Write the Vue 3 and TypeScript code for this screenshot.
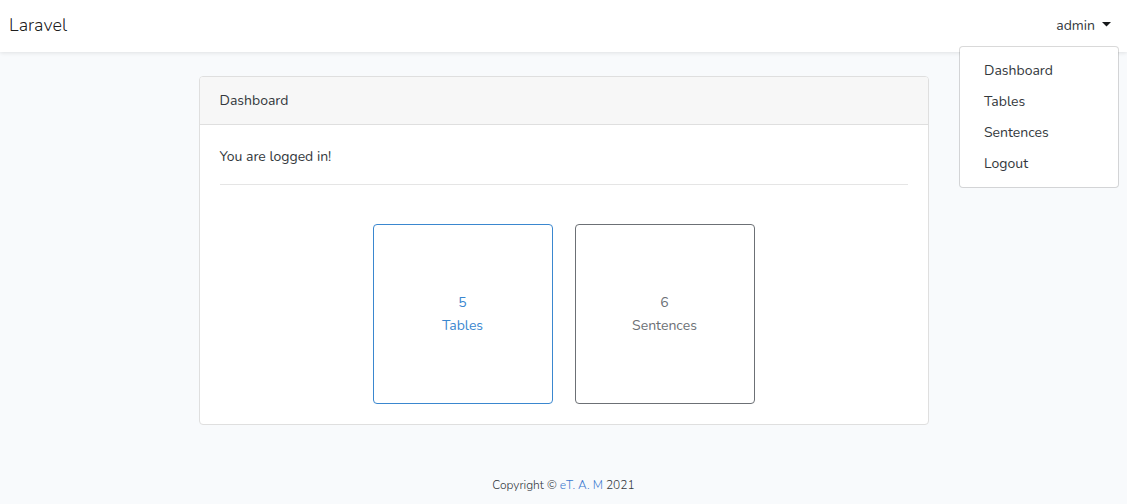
<script setup lang="ts">
import { ref } from 'vue'

interface MenuItem {
  label: string
  href: string
}

interface Stat {
  label: string
  count: number
  href: string
  variant: 'primary' | 'secondary'
}

const menuOpen = ref(true)

const menuItems: MenuItem[] = [
  { label: 'Dashboard', href: '#dashboard' },
  { label: 'Tables', href: '#tables' },
  { label: 'Sentences', href: '#sentences' },
  { label: 'Logout', href: '#logout' },
]

const stats: Stat[] = [
  { label: 'Tables', count: 5, href: '#tables', variant: 'primary' },
  { label: 'Sentences', count: 6, href: '#sentences', variant: 'secondary' },
]
</script>

<template>
  <div class="page">
    <header class="navbar">
      <a class="brand" href="#home">Laravel</a>
      <nav class="account">
        <button
          class="account-toggle"
          type="button"
          aria-haspopup="true"
          :aria-expanded="menuOpen"
          @click="menuOpen = !menuOpen"
        >
          admin
          <svg class="caret" viewBox="0 0 9 5" aria-hidden="true">
            <path d="M0 0h9L4.500 4.500z" fill="currentColor" />
          </svg>
        </button>
        <div v-if="menuOpen" class="menu">
          <a v-for="item in menuItems" :key="item.label" class="menu-item" :href="item.href">{{ item.label }}</a>
        </div>
      </nav>
    </header>

    <main class="content">
      <section class="card">
        <div class="card-header">Dashboard</div>
        <div class="card-body">
          <div>You are logged in!</div>
          <hr class="divider" />
          <div class="tiles">
            <a v-for="stat in stats" :key="stat.label" class="tile" :class="stat.variant" :href="stat.href">
              <span>{{ stat.count }}</span>
              <span>{{ stat.label }}</span>
            </a>
          </div>
        </div>
      </section>
    </main>

    <footer class="footer">Copyright © <a class="author" href="#author">eT. A. M</a> 2021</footer>
  </div>
</template>

<style>
body {
  margin: 0;
  background: #f8fafc;
}
</style>

<style scoped>
.page,
.page * {
  box-sizing: border-box;
}

.page {
  min-height: 100vh;
  font-family: Nunito, Lato, 'Open Sans', sans-serif;
  font-size: 14px;
  font-weight: 400;
  line-height: 23px;
  color: #33383c;
  background: #f8fafc;
}

a {
  text-decoration: none;
}

.navbar {
  display: flex;
  align-items: center;
  justify-content: space-between;
  height: 52px;
  padding: 0 8px;
  background: #fff;
  box-shadow: 0 1px 4px rgba(0, 0, 0, 0.1);
}

.brand {
  padding: 0 0 2px 1px;
  font-size: 18px;
  font-weight: 300;
  color: rgba(0, 0, 0, 0.9);
}

.account {
  position: relative;
}

.account-toggle {
  display: flex;
  align-items: center;
  gap: 7px;
  padding: 6px 8px 8px;
  border: 0;
  background: none;
  font: inherit;
  color: #33383c;
  cursor: pointer;
}

.caret {
  width: 9px;
  height: 5px;
  margin-bottom: 2px;
  color: #16181b;
}

.menu {
  position: absolute;
  top: 100%;
  right: 0;
  z-index: 10;
  min-width: 160px;
  margin-top: 1px;
  padding: 8px 0;
  border: 1px solid rgba(0, 0, 0, 0.15);
  border-radius: 4px;
  background: #fff;
  background-clip: padding-box;
}

.menu-item {
  display: block;
  padding: 4px 24px;
  color: #33383c;
}

.content {
  padding: 24px 16px;
}

.card {
  max-width: 730px;
  margin: 0 auto;
  border: 1px solid #dfdfdf;
  border-radius: 4px;
  background: #fff;
}

.card-header {
  padding: 12px 20px;
  border-bottom: 1px solid #dfdfdf;
  border-radius: 3px 3px 0 0;
  background: #f7f7f7;
}

.card-body {
  padding: 20px;
}

.divider {
  margin: 16px 0;
  border: 0;
  border-top: 1px solid #e5e5e5;
}

.tiles {
  display: flex;
  flex-wrap: wrap;
  justify-content: center;
  gap: 22px;
  margin-top: 39px;
}

.tile {
  display: flex;
  flex-direction: column;
  align-items: center;
  justify-content: center;
  width: 180px;
  height: 180px;
  border: 1px solid currentColor;
  border-radius: 4px;
}

.primary {
  color: #3a87cf;
}

.secondary {
  color: #6c7075;
}

.footer {
  padding: 27px 16px 10px;
  font-size: 12px;
  font-weight: 300;
  line-height: 19px;
  text-align: center;
}

.author {
  color: #3a78cf;
}
</style>
